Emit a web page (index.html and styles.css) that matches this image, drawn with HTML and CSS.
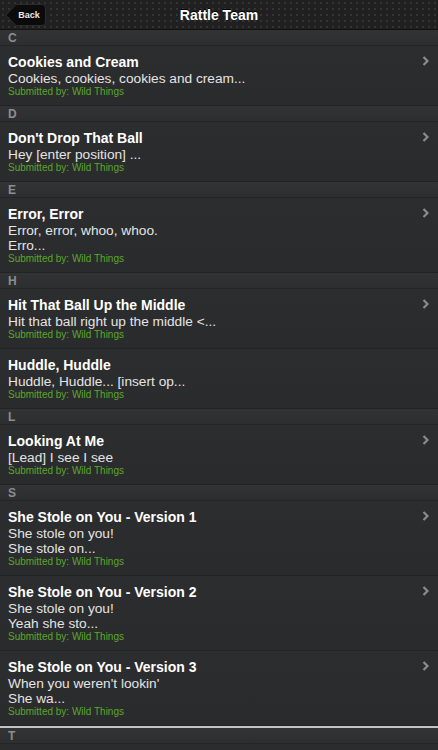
FILE: index.html
```html
<!DOCTYPE html>
<html lang="en">
<head>
  <meta charset="UTF-8" />
  <title>Rattle Team</title>
  <link rel="stylesheet" href="styles.css">
</head>
<body>
  <div class="navbar">
    <a class="back-btn" href="#">
      <svg class="back-shape" width="42" height="24" viewBox="0 0 42 24">
        <path d="M1 12 L11 1.5 H37 Q40.5 1.5 40.5 5 V19 Q40.5 22.5 37 22.5 H11 Z" fill="#0b0b0b" stroke="#2c2c2c" stroke-width="1"/>
      </svg>
      <span>Back</span>
    </a>
    <h1>Rattle Team</h1>
  </div>

  <div class="list">
    <div class="section">C</div>
    <div class="row">
      <div class="title">Cookies and Cream</div>
      <div class="snippet">Cookies, cookies, cookies and cream...</div>
      <div class="by">Submitted by: Wild Things</div>
      <svg class="chev" width="7" height="10" viewBox="0 0 7 10"><path d="M1.5 1 L5.5 5 L1.5 9" fill="none" stroke="#8c8c8c" stroke-width="2.2"/></svg>
    </div>

    <div class="section">D</div>
    <div class="row">
      <div class="title">Don't Drop That Ball</div>
      <div class="snippet">Hey [enter position] ...</div>
      <div class="by">Submitted by: Wild Things</div>
      <svg class="chev" width="7" height="10" viewBox="0 0 7 10"><path d="M1.5 1 L5.5 5 L1.5 9" fill="none" stroke="#8c8c8c" stroke-width="2.2"/></svg>
    </div>

    <div class="section">E</div>
    <div class="row">
      <div class="title">Error, Error</div>
      <div class="snippet">Error, error, whoo, whoo.<br>Erro...</div>
      <div class="by">Submitted by: Wild Things</div>
      <svg class="chev" width="7" height="10" viewBox="0 0 7 10"><path d="M1.5 1 L5.5 5 L1.5 9" fill="none" stroke="#8c8c8c" stroke-width="2.2"/></svg>
    </div>

    <div class="section">H</div>
    <div class="row">
      <div class="title">Hit That Ball Up the Middle</div>
      <div class="snippet">Hit that ball right up the middle &lt;...</div>
      <div class="by">Submitted by: Wild Things</div>
      <svg class="chev" width="7" height="10" viewBox="0 0 7 10"><path d="M1.5 1 L5.5 5 L1.5 9" fill="none" stroke="#8c8c8c" stroke-width="2.2"/></svg>
    </div>
    <div class="row">
      <div class="title">Huddle, Huddle</div>
      <div class="snippet">Huddle, Huddle... [insert op...</div>
      <div class="by">Submitted by: Wild Things</div>
    </div>

    <div class="section">L</div>
    <div class="row">
      <div class="title">Looking At Me</div>
      <div class="snippet">[Lead] I see I see</div>
      <div class="by">Submitted by: Wild Things</div>
      <svg class="chev" width="7" height="10" viewBox="0 0 7 10"><path d="M1.5 1 L5.5 5 L1.5 9" fill="none" stroke="#8c8c8c" stroke-width="2.2"/></svg>
    </div>

    <div class="section">S</div>
    <div class="row">
      <div class="title">She Stole on You - Version 1</div>
      <div class="snippet">She stole on you!<br>She stole on...</div>
      <div class="by">Submitted by: Wild Things</div>
      <svg class="chev" width="7" height="10" viewBox="0 0 7 10"><path d="M1.5 1 L5.5 5 L1.5 9" fill="none" stroke="#8c8c8c" stroke-width="2.2"/></svg>
    </div>
    <div class="row">
      <div class="title">She Stole on You - Version 2</div>
      <div class="snippet">She stole on you!<br>Yeah she sto...</div>
      <div class="by">Submitted by: Wild Things</div>
      <svg class="chev" width="7" height="10" viewBox="0 0 7 10"><path d="M1.5 1 L5.5 5 L1.5 9" fill="none" stroke="#8c8c8c" stroke-width="2.2"/></svg>
    </div>
    <div class="row">
      <div class="title">She Stole on You - Version 3</div>
      <div class="snippet">When you weren't lookin'<br>She wa...</div>
      <div class="by">Submitted by: Wild Things</div>
      <svg class="chev" width="7" height="10" viewBox="0 0 7 10"><path d="M1.5 1 L5.5 5 L1.5 9" fill="none" stroke="#8c8c8c" stroke-width="2.2"/></svg>
    </div>

    <div class="section section-last">T</div>
  </div>
</body>
</html>
```

FILE: styles.css
```css
html, body {
  margin: 0;
  padding: 0;
  background: #2b2c2e;
  font-family: 'Liberation Sans', Arial, sans-serif;
  overflow: hidden;
}
.navbar {
  height: 29px;
  display: flex;
  align-items: center;
  justify-content: center;
  position: relative;
  background-color: #202020;
  background-image: radial-gradient(circle, #343434 0.8px, transparent 1px);
  background-size: 6px 6px;
  border-bottom: 1px solid #121212;
}
.navbar h1 {
  margin: 0;
  font-size: 14px;
  font-weight: bold;
  color: #ffffff;
  text-shadow: 0 -1px 0 #000;
}
.back-btn {
  position: absolute;
  left: 5px;
  top: 3px;
  width: 42px;
  height: 24px;
  display: flex;
  align-items: center;
  justify-content: center;
  text-decoration: none;
}
.back-shape {
  position: absolute;
  left: 0;
  top: 0;
}
.back-btn span {
  position: relative;
  margin-left: 6px;
  font-size: 9px;
  font-weight: bold;
  color: #e8e8e8;
}
.section {
  height: 16px;
  box-sizing: border-box;
  padding-left: 8px;
  font-size: 12px;
  line-height: 16px;
  font-weight: bold;
  color: #8d8d8f;
  background: linear-gradient(#323335, #2d2e30);
  border-bottom: 1px solid #242527;
}
.section-last {
  border-top: 2px solid #c4c4c4;
  height: 18px;
}
.row {
  position: relative;
  padding: 8px 30px 7px 8px;
  background: linear-gradient(#2c2d2f, #2a2b2d);
  border-bottom: 1px solid #222325;
}
.title {
  font-size: 14px;
  line-height: 17px;
  font-weight: bold;
  color: #ffffff;
}
.snippet {
  font-size: 13.7px;
  line-height: 15px;
  color: #e4e4e4;
}
.by {
  font-size: 10px;
  line-height: 12px;
  color: #5aa72a;
}
.chev {
  position: absolute;
  right: 9px;
  top: 10px;
}
```
